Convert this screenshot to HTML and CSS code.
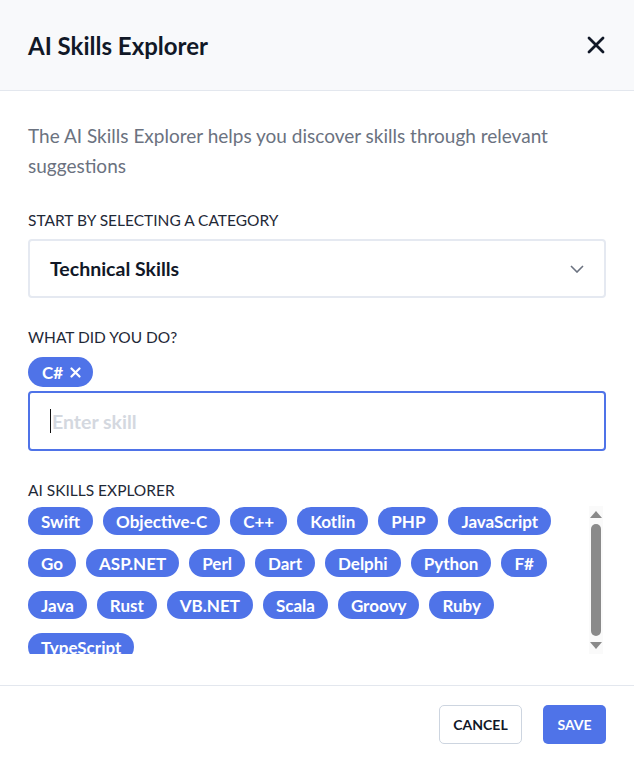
FILE: index.html
```html
<!DOCTYPE html>
<html lang="en">
<head>
  <meta charset="UTF-8" />
  <meta name="viewport" content="width=device-width, initial-scale=1.0"/>
  <title>AI Skills Explorer</title>
  <link rel="stylesheet" href="styles.css">
</head>
<body>
  <div class="modal">
    <header class="modal-head">
      <h1>AI Skills Explorer</h1>
      <button class="close" aria-label="Close">
        <svg width="18" height="18" viewBox="0 0 18 18"><path d="M2 2L16 16M16 2L2 16" stroke="#111827" stroke-width="2.8" stroke-linecap="round"/></svg>
      </button>
    </header>

    <div class="modal-body">
      <p class="intro">The AI Skills Explorer helps you discover skills through relevant suggestions</p>

      <label class="field-label">Start by selecting a category</label>
      <div class="select">
        <span>Technical Skills</span>
        <svg width="14" height="8" viewBox="0 0 14 8"><path d="M1 1L7 7L13 1" fill="none" stroke="#6b7280" stroke-width="1.6"/></svg>
      </div>

      <label class="field-label">What did you do?</label>
      <div class="picked">
        <span class="chip">C#
          <svg width="11" height="11" viewBox="0 0 11 11"><path d="M1.5 1.5L9.5 9.5M9.5 1.5L1.5 9.5" stroke="#fff" stroke-width="2.2" stroke-linecap="round"/></svg>
        </span>
      </div>
      <div class="skill-input"><span class="caret"></span><span class="placeholder">Enter skill</span></div>

      <label class="field-label explorer-label">AI Skills Explorer</label>
      <div class="suggest-wrap">
        <div class="suggest">
          <span class="chip">Swift</span>
          <span class="chip">Objective-C</span>
          <span class="chip">C++</span>
          <span class="chip">Kotlin</span>
          <span class="chip">PHP</span>
          <span class="chip">JavaScript</span>
          <span class="chip">Go</span>
          <span class="chip">ASP.NET</span>
          <span class="chip">Perl</span>
          <span class="chip">Dart</span>
          <span class="chip">Delphi</span>
          <span class="chip">Python</span>
          <span class="chip">F#</span>
          <span class="chip">Java</span>
          <span class="chip">Rust</span>
          <span class="chip">VB.NET</span>
          <span class="chip">Scala</span>
          <span class="chip">Groovy</span>
          <span class="chip">Ruby</span>
          <span class="chip">TypeScript</span>
        </div>
        <div class="scrollbar">
          <span class="arrow up"></span>
          <span class="thumb"></span>
          <span class="arrow down"></span>
        </div>
      </div>
    </div>

    <footer class="modal-foot">
      <button class="btn btn-cancel">Cancel</button>
      <button class="btn btn-save">Save</button>
    </footer>
  </div>
</body>
</html>
```

FILE: styles.css
```css
body { margin: 0; font-family: Lato, "Open Sans", sans-serif; background: #fff; color: #1f2937; }
.modal { width: 634px; height: 762px; display: flex; flex-direction: column; }

.modal-head {
  height: 91px;
  box-sizing: border-box;
  background: #f8f9fb;
  border-bottom: 1px solid #e3e7ee;
  display: flex;
  align-items: center;
  justify-content: space-between;
  padding: 0 28px;
}
.modal-head h1 { margin: 0; font-size: 24px; font-weight: 700; color: #111827; }
.close { border: none; background: none; padding: 0; width: 18px; height: 18px; cursor: pointer; margin-right: 1px; }
.close svg { display: block; }

.modal-body { padding: 30px 28px 0; flex: 1; }
.intro { margin: 0 0 30px; padding-right: 40px; font-size: 19px; line-height: 30px; color: #6b7280; }

.field-label { display: block; text-transform: uppercase; font-size: 15.5px; color: #1f2937; margin-bottom: 10px; }

.select {
  height: 59px;
  box-sizing: border-box;
  border: 2px solid #e5e9f1;
  border-radius: 4px;
  display: flex;
  align-items: center;
  justify-content: space-between;
  padding: 0 20px 0 20px;
  margin-bottom: 30px;
}
.select span { font-size: 19.5px; font-weight: 700; color: #111827; }

.picked { display: flex; margin-top: 11px; margin-bottom: 4px; }
.chip {
  display: inline-flex;
  align-items: center;
  gap: 7px;
  height: 28px;
  padding: 0 13px;
  border-radius: 14px;
  background: #4f73e8;
  color: #fff;
  font-size: 17px;
  font-weight: 700;
  box-sizing: border-box;
}
.picked .chip { height: 30px; border-radius: 15px; padding: 0 12px 0 14px; }

.skill-input {
  height: 60px;
  box-sizing: border-box;
  border: 2px solid #4f73e8;
  border-radius: 4px;
  display: flex;
  align-items: center;
  padding: 0 20px;
  margin-bottom: 30px;
}
.caret { width: 1px; height: 24px; background: #111; margin-right: 1px; }
.placeholder { font-size: 19.5px; font-weight: 700; color: #d4d8df; }

.explorer-label { margin-bottom: 7px; }

.suggest-wrap { display: flex; height: 148px; overflow: hidden; }
.suggest {
  flex: 1;
  display: flex;
  flex-wrap: wrap;
  align-content: flex-start;
  gap: 14px 10px;
  padding-top: 1px;
}
.scrollbar {
  width: 14px;
  margin-right: 3px;
  margin-left: 20px;
  background: #fafafa;
  display: flex;
  flex-direction: column;
  align-items: center;
  padding: 2px 0;
  box-sizing: border-box;
}
.arrow { width: 0; height: 0; border-left: 6px solid transparent; border-right: 6px solid transparent; }
.arrow.up { border-bottom: 7px solid #8a8a8a; margin: 3px 0 6px; }
.arrow.down { border-top: 7px solid #8a8a8a; margin: 6px 0 3px; }
.thumb { width: 10px; flex: 1; background: #8a8a8a; border-radius: 5px; }

.modal-foot {
  border-top: 1px solid #e3e7ee;
  height: 77px;
  box-sizing: border-box;
  display: flex;
  justify-content: flex-end;
  align-items: center;
  gap: 21px;
  padding: 0 28px;
}
.btn {
  height: 39px;
  border-radius: 5px;
  font-family: inherit;
  font-size: 14px;
  font-weight: 700;
  text-transform: uppercase;
  cursor: pointer;
}
.btn-cancel { width: 83px; background: #fff; border: 1px solid #cdd5e0; color: #111827; }
.btn-save { width: 63px; background: #4f73e8; border: none; color: #fff; }
```
